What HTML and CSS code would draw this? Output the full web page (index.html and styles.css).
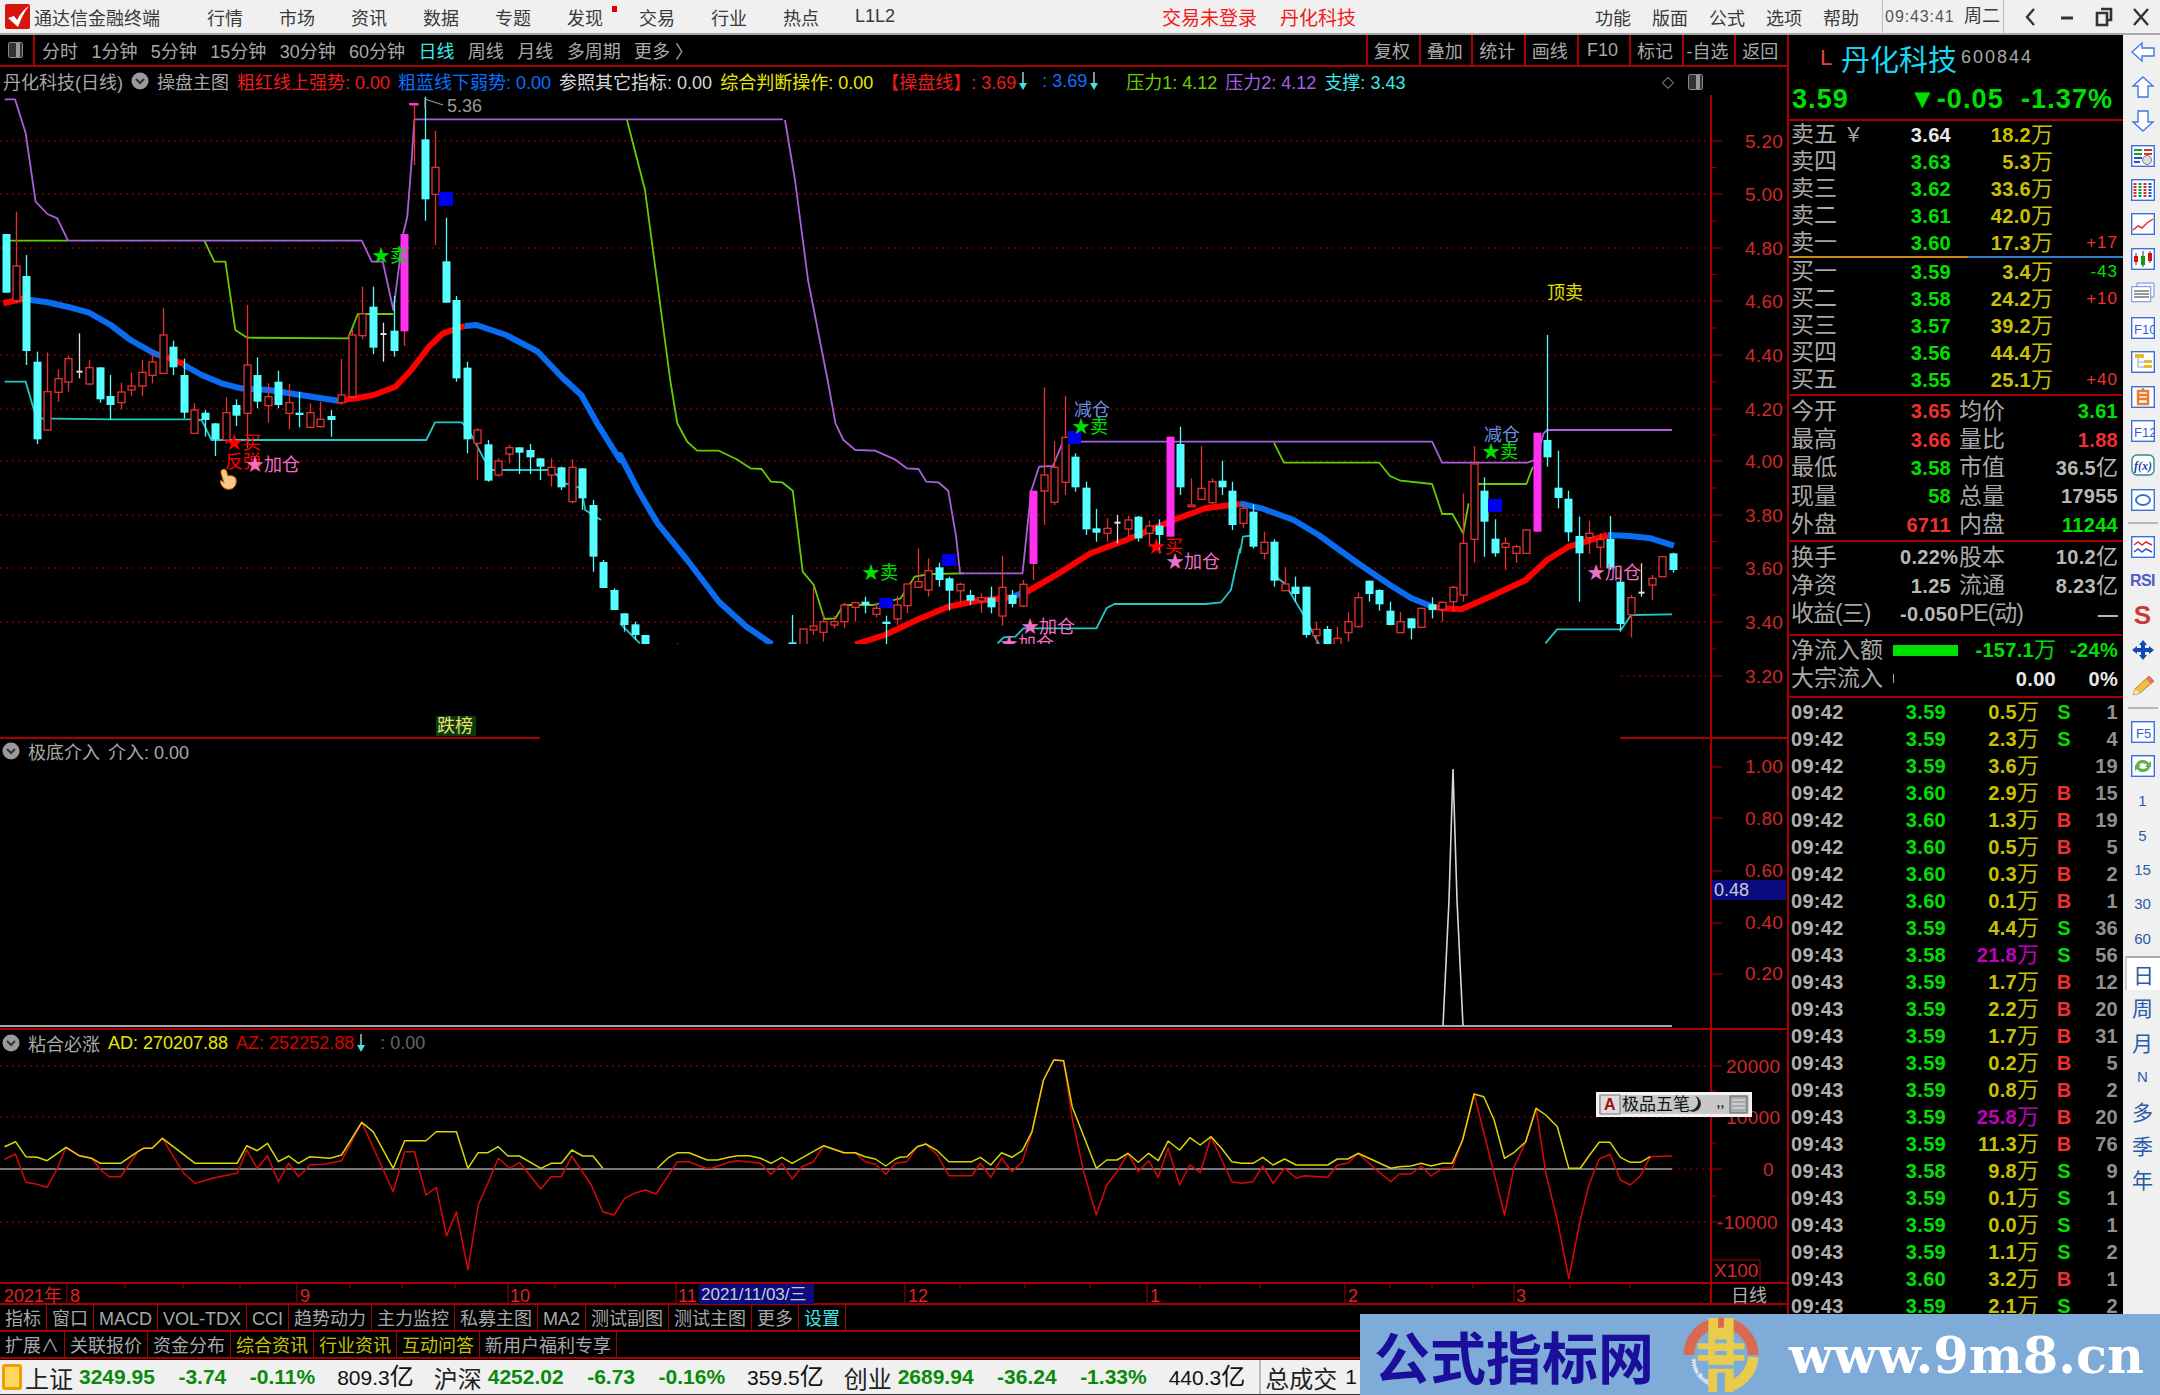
FILE: index.html
```html
<!DOCTYPE html>
<html lang="zh-CN">
<head>
<meta charset="utf-8">
<title>通达信金融终端</title>
<link rel="stylesheet" href="styles.css">
</head>
<body>
<div class="app">
  <header class="topbar">
    <svg class="logo" viewBox="0 0 25 25"><rect width="25" height="25" rx="2" fill="#d8140f"/><path d="M3 14 9 12 12 16C15 10 19 5 24 2 19 8 16 15 13 23Z" fill="#fff"/></svg>
    <span class="app-title">通达信金融终端</span>
    <nav class="menu">
      <span>行情</span><span>市场</span><span>资讯</span><span>数据</span><span>专题</span><span class="dotted">发现</span><span>交易</span><span>行业</span><span>热点</span><span>L1L2</span>
    </nav>
    <span class="top-red login">交易未登录</span>
    <span class="top-red stock">丹化科技</span>
    <nav class="menu menu-right"><span>功能</span><span>版面</span><span>公式</span><span>选项</span><span>帮助</span></nav>
    <span class="clock">09:43:41</span><span class="week">周二</span>
    <div class="winbtns">
      <svg viewBox="0 0 12 20"><path d="M10 2 3 10 10 18" fill="none" stroke="#333" stroke-width="2.4"/></svg>
      <svg viewBox="0 0 16 20"><path d="M2 11H14" stroke="#333" stroke-width="3"/></svg>
      <svg viewBox="0 0 18 20"><path d="M6 2H16V13H13M2 6H12V18H2Z" fill="none" stroke="#333" stroke-width="2.6"/></svg>
      <svg viewBox="0 0 18 20"><path d="M2 2 16 18M16 2 2 18" stroke="#333" stroke-width="2.4"/></svg>
    </div>
  </header>

  <div class="body">
    <main class="left">
      <div class="toolbar">
        <div class="tb-icon"><span class="winglyph"></span></div>
        <div class="tabs">
          <span>分时</span><span>1分钟</span><span>5分钟</span><span>15分钟</span><span>30分钟</span><span>60分钟</span><span class="on">日线</span><span>周线</span><span>月线</span><span>多周期</span><span>更多 〉</span>
        </div>
        <div class="tb-btns">
          <span>复权</span><span>叠加</span><span>统计</span><span>画线</span><span>F10</span><span>标记</span><span>-自选</span><span>返回</span>
        </div>
      </div>

      <section class="panel panel-main">
        <div class="legend legend-main">
          <span class="c-grey">丹化科技(日线)</span>
          <svg class="chev" viewBox="0 0 18 18"><circle cx="9" cy="9" r="8.5" fill="#9a9a9a"/><path d="M5 7 9 11 13 7" fill="none" stroke="#333" stroke-width="2"/></svg>
          <span class="c-grey">操盘主图</span>
          <span class="c-red">粗红线上强势: 0.00</span>
          <span class="c-blue">粗蓝线下弱势: 0.00</span>
          <span class="c-white">参照其它指标: 0.00</span>
          <span class="c-yellow">综合判断操作: 0.00</span>
          <span class="c-red item-arrow">【操盘线】: 3.69<svg class="down" viewBox="0 0 8 18"><path d="M4 0V12" stroke="#d8f8f8" stroke-width="1.2"/><path d="M0 11H8L4 18Z" fill="#3fe8e8"/></svg></span>
          <span class="c-blue item-arrow item-gap">: 3.69<svg class="down" viewBox="0 0 8 18"><path d="M4 0V12" stroke="#d8f8f8" stroke-width="1.2"/><path d="M0 11H8L4 18Z" fill="#3fe8e8"/></svg></span>
          <span class="c-lime item-gap2">压力1: 4.12</span>
          <span class="c-purple">压力2: 4.12</span>
          <span class="c-cyan">支撑: 3.43</span>
          <span class="legend-tools"><i class="diamond">◇</i><span class="winglyph"></span></span>
        </div>
        <svg class="plot plot-main" viewBox="0 95 1787 644">
          <g id="grid-main"></g>
          <g id="main-lines"></g>
          <g id="main-candles"></g>
          <path d="M425 108V99L443 105" fill="none" stroke="#9a9a9a" stroke-width="1.2"/>
          <text class="t-sm fill-grey" x="447" y="112">5.36</text>
          <g class="mark">
            <text class="fill-green" x="372" y="262">★卖</text>
            <text class="fill-red" x="225" y="449">★买</text>
            <text class="fill-red" x="225" y="468">反弹</text>
            <text class="fill-pink" x="246" y="471">★加仓</text>
            <text class="fill-green" x="862" y="579">★卖</text>
            <text class="fill-steel" x="1074" y="416">减仓</text>
            <text class="fill-green" x="1072" y="433">★卖</text>
            <text class="fill-red" x="1147" y="553">★买</text>
            <text class="fill-pink" x="1166" y="568">★加仓</text>
            <text class="fill-pink" x="1021" y="633">★加仓</text>
            <text class="fill-pink" x="1000" y="650">★加仓</text>
            <text class="fill-yellow" x="1547" y="299">顶卖</text>
            <text class="fill-steel" x="1484" y="441">减仓</text>
            <text class="fill-green" x="1482" y="458">★卖</text>
            <text class="fill-pink" x="1587" y="579">★加仓</text>
          </g>
          <path d="M222 470c2-2 5 0 5 3l1 3c3-1 7 0 8 3 1 4-1 9-5 10-5 1-8-1-10-5-1-3-1-4 1-3l2 2-3-10c0-2 0-3 1-3Z" fill="#f6c98a" stroke="#c76a10" stroke-width="1"/>
          <rect x="0" y="644" width="1620" height="93" fill="#000"/>
          <path class="dot" d="M1621 676H1711"/>
          <g id="axis-main"></g>
          <rect class="badge" x="436" y="716" width="40" height="20"/>
          <text class="badge-text" x="437" y="732">跌榜</text>
          <path class="red2" d="M0 738H540M1620 738H1787"/>
        </svg>
      </section>

      <section class="panel panel-mid">
        <div class="legend">
          <svg class="chev" viewBox="0 0 18 18"><circle cx="9" cy="9" r="8.5" fill="#9a9a9a"/><path d="M5 7 9 11 13 7" fill="none" stroke="#333" stroke-width="2"/></svg>
          <span class="c-grey">极底介入</span>
          <span class="c-grey">介入: 0.00</span>
        </div>
        <svg class="plot plot-mid" viewBox="0 763 1787 267">
          <path class="grey-line" d="M0 1026H1672"/>
          <path d="M1443 1026 1449 900 1453 769 1457 900 1463 1026" fill="none" stroke="#d8d8d8" stroke-width="1.6"/>
          <path class="red2" d="M1711 738V1030"/>
          <path class="red1" d="M1711 767H1722M1711 818H1722M1711 871H1722M1711 923H1722M1711 974H1722"/>
          <g class="axis-text">
            <text x="1745" y="773">1.00</text><text x="1745" y="825">0.80</text><text x="1745" y="877">0.60</text><text x="1745" y="929">0.40</text><text x="1745" y="980">0.20</text>
          </g>
          <rect x="1712" y="880" width="74" height="20" fill="#0b0b80"/>
          <text class="t-sm fill-lightgrey" x="1714" y="896">0.48</text>
          <path class="red2" d="M0 1029H1787"/>
        </svg>
      </section>

      <section class="panel panel-low">
        <div class="legend">
          <svg class="chev" viewBox="0 0 18 18"><circle cx="9" cy="9" r="8.5" fill="#9a9a9a"/><path d="M5 7 9 11 13 7" fill="none" stroke="#333" stroke-width="2"/></svg>
          <span class="c-grey">粘合必涨</span>
          <span class="c-yellow">AD: 270207.88</span>
          <span class="c-red2 item-arrow">AZ: 252252.88<svg class="down" viewBox="0 0 8 18"><path d="M4 0V12" stroke="#d8f8f8" stroke-width="1.2"/><path d="M0 11H8L4 18Z" fill="#3fe8e8"/></svg></span>
          <span class="c-dim item-gap">: 0.00</span>
        </div>
        <svg class="plot plot-low" viewBox="0 1056 1787 226">
          <path class="dot" d="M0 1066H1711M0 1117H1711M0 1222H1711M1672 1169H1711"/>
          <path class="zero" d="M0 1169H1672"/>
          <g id="low-lines"></g>
          <path class="red2" d="M1711 1030V1282"/>
          <path class="red1" d="M1711 1066H1722M1711 1117H1722M1711 1169H1722M1711 1222H1722M1711 1091H1716M1711 1143H1716M1711 1196H1716M1711 1260H1760V1281"/>
          <g class="axis-text">
            <text x="1726" y="1073">20000</text><text x="1726" y="1124">10000</text><text x="1763" y="1176">0</text><text x="1717" y="1229">-10000</text>
          </g>
          <text class="t-axis-x" x="1714" y="1277">X100</text>
          <g class="ime">
            <rect x="1596" y="1092" width="156" height="25" fill="#f2f2f2"/>
            <rect x="1599" y="1095" width="150" height="19" fill="#c8c8c8"/>
            <rect x="1600" y="1095" width="20" height="19" fill="#ddd" stroke="#777"/>
            <text class="ime-a" x="1604" y="1110">A</text>
            <text class="ime-t" x="1622" y="1110">极品五笔</text>
            <path d="M1695 1096a8 8 0 1 1-7 14 8 8 0 0 0 7-14Z" fill="#222"/>
            <text class="ime-t" x="1716" y="1107">,</text>
            <text class="ime-t" x="1720" y="1107">,</text>
            <rect x="1730" y="1096" width="17" height="17" fill="#aaa" stroke="#666"/>
            <path d="M1732 1100H1745M1732 1104H1745M1732 1108H1745" stroke="#eee"/>
          </g>
        </svg>
      </section>

      <svg class="plot timeaxis" viewBox="0 1282 1787 23">
        <path class="red2" d="M0 1283H1787M0 1304H1787M1711 1282V1305"/>
        <path class="red1" d="M67 1283V1304M297 1283V1304M508 1283V1304M676 1283V1304M905 1283V1304M1147 1283V1304M1345 1283V1304M1514 1283V1304M125 1283V1288M183 1283V1288M240 1283V1288M350 1283V1288M402 1283V1288M455 1283V1288M555 1283V1288M615 1283V1288M780 1283V1288M960 1283V1288M1025 1283V1288M1090 1283V1288M1200 1283V1288M1260 1283V1288M1390 1283V1288M1432 1283V1288M1473 1283V1288M1570 1283V1288M1630 1283V1288"/>
        <g class="date-text">
          <text x="4" y="1302">2021年</text><text x="70" y="1302">8</text><text x="300" y="1302">9</text><text x="510" y="1302">10</text><text x="678" y="1302">11</text><text x="908" y="1302">12</text><text x="1150" y="1302">1</text><text x="1348" y="1302">2</text><text x="1516" y="1302">3</text>
        </g>
        <rect x="699" y="1284" width="115" height="20" fill="#0b0b80"/>
        <text class="date-sel" x="701" y="1300">2021/11/03/三</text>
        <text class="date-right" x="1731" y="1302">日线</text>
      </svg>

      <div class="btnrow">
        <span>指标</span><span>窗口</span><span>MACD</span><span>VOL-TDX</span><span>CCI</span><span>趋势动力</span><span>主力监控</span><span>私募主图</span><span>MA2</span><span>测试副图</span><span>测试主图</span><span>更多</span><span class="c-cyan">设置</span>
      </div>
      <div class="btnrow">
        <span>扩展∧</span><span>关联报价</span><span>资金分布</span><span class="c-olive">综合资讯</span><span class="c-olive">行业资讯</span><span class="c-olive">互动问答</span><span>新用户福利专享</span>
      </div>
    </main>

    <aside class="quote">
      <div class="q-name"><span class="q-l">L</span><span class="q-cn">丹化科技</span><span class="q-code">600844</span></div>
      <div class="q-price"><span>3.59</span><span class="q-chg">▼-0.05</span><span class="q-pct">-1.37%</span></div>

      <div class="book">
        <div class="b-row"><span class="lb">卖五 <small>￥</small></span><span class="num c-w">3.64</span><span class="vol">18.2<i>万</i></span><span class="dlt"></span></div>
        <div class="b-row"><span class="lb">卖四</span><span class="num c-g">3.63</span><span class="vol">5.3<i>万</i></span><span class="dlt"></span></div>
        <div class="b-row"><span class="lb">卖三</span><span class="num c-g">3.62</span><span class="vol">33.6<i>万</i></span><span class="dlt"></span></div>
        <div class="b-row"><span class="lb">卖二</span><span class="num c-g">3.61</span><span class="vol">42.0<i>万</i></span><span class="dlt"></span></div>
        <div class="b-row"><span class="lb">卖一</span><span class="num c-g">3.60</span><span class="vol">17.3<i>万</i></span><span class="dlt c-r">+17</span></div>
      </div>
      <div class="twotone"><span></span><span></span></div>
      <div class="book book-buy">
        <div class="b-row"><span class="lb">买一</span><span class="num c-g">3.59</span><span class="vol">3.4<i>万</i></span><span class="dlt c-g">-43</span></div>
        <div class="b-row"><span class="lb">买二</span><span class="num c-g">3.58</span><span class="vol">24.2<i>万</i></span><span class="dlt c-r">+10</span></div>
        <div class="b-row"><span class="lb">买三</span><span class="num c-g">3.57</span><span class="vol">39.2<i>万</i></span><span class="dlt"></span></div>
        <div class="b-row"><span class="lb">买四</span><span class="num c-g">3.56</span><span class="vol">44.4<i>万</i></span><span class="dlt"></span></div>
        <div class="b-row"><span class="lb">买五</span><span class="num c-g">3.55</span><span class="vol">25.1<i>万</i></span><span class="dlt c-r">+40</span></div>
      </div>

      <div class="stats stats-a">
        <div class="s-row"><span class="lb">今开</span><span class="num c-r">3.65</span><span class="lb l2">均价</span><span class="num c-g">3.61</span></div>
        <div class="s-row"><span class="lb">最高</span><span class="num c-r">3.66</span><span class="lb l2">量比</span><span class="num c-r">1.88</span></div>
        <div class="s-row"><span class="lb">最低</span><span class="num c-g">3.58</span><span class="lb l2">市值</span><span class="num c-s">36.5<i>亿</i></span></div>
        <div class="s-row"><span class="lb">现量</span><span class="num c-g">58</span><span class="lb l2">总量</span><span class="num c-s">17955</span></div>
        <div class="s-row"><span class="lb">外盘</span><span class="num c-r">6711</span><span class="lb l2">内盘</span><span class="num c-g">11244</span></div>
      </div>
      <div class="stats stats-b">
        <div class="s-row"><span class="lb">换手</span><span class="num c-s">0.22%</span><span class="lb l2">股本</span><span class="num c-s">10.2<i>亿</i></span></div>
        <div class="s-row"><span class="lb">净资</span><span class="num c-s">1.25</span><span class="lb l2">流通</span><span class="num c-s">8.23<i>亿</i></span></div>
        <div class="s-row"><span class="lb lb-tight">收益(三)</span><span class="num c-s">-0.050</span><span class="lb l2 lb-tight">PE(动)</span><span class="num c-s">—</span></div>
      </div>
      <div class="flow">
        <div class="f-row"><span class="lb">净流入额</span><span class="bar"><b></b></span><span class="num c-g">-157.1<i>万</i></span><span class="num c-g">-24%</span></div>
        <div class="f-row"><span class="lb">大宗流入</span><span class="bar"><u></u></span><span class="num c-w">0.00</span><span class="num c-w">0%</span></div>
      </div>
      <div class="ticks" id="ticks"></div>
    </aside>

    <aside class="iconbar">
      <div class="ic"><svg viewBox="0 0 24 22"><path d="M1 11 11 2V7H23V15H11V20Z" class="ol"/></svg></div>
      <div class="ic"><svg viewBox="0 0 24 22"><path d="M12 1 22 10H17V21H7V10H2Z" class="ol"/></svg></div>
      <div class="ic"><svg viewBox="0 0 24 22"><path d="M12 21 22 12H17V1H7V12H2Z" class="ol"/></svg></div>
      <div class="ic"><svg viewBox="0 0 24 22"><rect class="box" x=".7" y=".7" width="22.6" height="20.6"/><path d="M3 5H11M3 9H11" stroke="#1a9a30" stroke-width="2"/><path d="M13 5H21M13 9H21" stroke="#d83030" stroke-width="2"/><path d="M3 13H11M3 17H9" stroke="#2a50c0" stroke-width="2"/><circle cx="16" cy="15" r="4.5" fill="#ddd" stroke="#777"/></svg></div>
      <div class="ic"><svg viewBox="0 0 24 22"><rect class="box" x=".7" y=".7" width="22.6" height="20.6"/><path d="M4 4V18" stroke="#d83030" stroke-width="3" stroke-dasharray="2 1"/><path d="M9 4V18" stroke="#1a9a30" stroke-width="3" stroke-dasharray="2 1"/><path d="M14 4V18" stroke="#d83030" stroke-width="3" stroke-dasharray="2 1"/><path d="M19 4V18" stroke="#2a50c0" stroke-width="3" stroke-dasharray="2 1"/></svg></div>
      <div class="ic"><svg viewBox="0 0 24 22"><rect class="box" x=".7" y=".7" width="22.6" height="20.6"/><path d="M2 17 7 13 11 15 16 10 22 6" fill="none" stroke="#e03030" stroke-width="1.5"/></svg></div>
      <div class="ic"><svg viewBox="0 0 24 22"><rect class="box" x=".7" y=".7" width="22.6" height="20.6"/><path d="M5 5V17M12 3V19M19 3V15" stroke="#333"/><rect x="3" y="8" width="4" height="6" fill="#d81010"/><rect x="10" y="8" width="4" height="9" fill="#109a10"/><rect x="17" y="5" width="4" height="8" fill="#d81010"/></svg></div>
      <div class="ic"><svg viewBox="0 0 24 22"><path d="M6 1H23V15H6Z" fill="#f4f8ff" stroke="#6a90d8"/><rect x=".7" y="4.7" width="19" height="15" fill="#fff" stroke="#6a90d8"/><path d="M3 9H18M3 12H18M3 15H18" stroke="#777" stroke-width="1.4"/></svg></div>
      <div class="ic"><svg viewBox="0 0 24 22"><rect class="box" x=".7" y=".7" width="22.6" height="20.6"/><text class="ic-f" x="3" y="17">F10</text></svg></div>
      <div class="ic"><svg viewBox="0 0 24 22"><rect class="box" x=".7" y=".7" width="22.6" height="20.6"/><path d="M7 7V16H13M7 11H13" fill="none" stroke="#8aa0d0"/><rect x="4" y="3" width="9" height="4" fill="#e8b830"/><rect x="13" y="9" width="8" height="3" fill="#e8b830"/><rect x="13" y="14" width="8" height="3" fill="#e8b830"/></svg></div>
      <div class="ic"><svg viewBox="0 0 24 22"><rect class="box" x=".7" y=".7" width="22.6" height="20.6"/><path d="M7 5H17V18H7ZM7 9H17M7 13H17M12 2V5" fill="none" stroke="#f07a28" stroke-width="2.4"/></svg></div>
      <div class="ic"><svg viewBox="0 0 24 22"><rect class="box" x=".7" y=".7" width="22.6" height="20.6"/><text class="ic-f" x="3" y="17">F12</text></svg></div>
      <div class="ic"><svg viewBox="0 0 24 22"><rect x="1" y="1" width="22" height="20" rx="5" fill="#fff" stroke="#2a8a8a" stroke-width="1.4"/><text class="ic-fx" x="3" y="16">f(x)</text></svg></div>
      <div class="ic"><svg viewBox="0 0 24 22"><rect class="box" x=".7" y=".7" width="22.6" height="20.6"/><ellipse cx="12" cy="11" rx="7" ry="5" fill="#fff" stroke="#3a70d0" stroke-width="2"/></svg></div>
      <div class="ic sep"></div>
      <div class="ic"><svg viewBox="0 0 24 22"><rect class="box" x=".7" y=".7" width="22.6" height="20.6"/><path d="M3 9 7 6 11 9 15 6 21 9" fill="none" stroke="#d83030" stroke-width="1.5"/><path d="M3 16 7 13 11 16 15 13 21 16" fill="none" stroke="#3050d0" stroke-width="1.5"/></svg></div>
      <div class="ic ic-rsi">RSI</div>
      <div class="ic ic-s">S</div>
      <div class="ic"><svg viewBox="0 0 24 22"><path d="M12 1 16 6H14V9H18V7L23 11 18 15V13H14V16H16L12 21 8 16H10V13H6V15L1 11 6 7V9H10V6H8Z" fill="#1048b8"/></svg></div>
      <div class="ic"><svg viewBox="0 0 24 22"><path d="M2 21 4 15 18 2 23 7 9 19Z" fill="#f0c040" stroke="#b88020"/><path d="M18 2 23 7 20 10 15 5Z" fill="#e87070"/><path d="M2 21 4 15 9 19Z" fill="#f8e0c0"/></svg></div>
      <div class="ic sep"></div>
      <div class="ic"><svg viewBox="0 0 24 22"><rect class="box" x=".7" y=".7" width="22.6" height="20.6"/><text class="ic-f" x="5" y="17">F5</text></svg></div>
      <div class="ic"><svg viewBox="0 0 24 22"><rect class="box" x=".7" y=".7" width="22.6" height="20.6"/><path d="M5 10A7 6 0 0 1 18 8L20 6V12H14L16 10A5 4 0 0 0 7 11ZM19 12A7 6 0 0 1 6 14L4 16V10H10L8 12A5 4 0 0 0 17 11Z" fill="#60b050"/></svg></div>
      <div class="ic per">1</div><div class="ic per">5</div><div class="ic per">15</div><div class="ic per">30</div><div class="ic per">60</div>
      <div class="ic per cn sel">日</div><div class="ic per cn">周</div><div class="ic per cn">月</div><div class="ic per">N</div><div class="ic per cn">多</div><div class="ic per cn">季</div><div class="ic per cn">年</div>
    </aside>
  </div>

  <footer class="status">
    <span class="st-ic"></span>
    <span class="st-name">上证</span><span class="st-g first">3249.95</span><span class="st-g">-3.74</span><span class="st-g">-0.11%</span><span class="st-k">809.3<i>亿</i></span>
    <span class="st-name">沪深</span><span class="st-g first">4252.02</span><span class="st-g">-6.73</span><span class="st-g">-0.16%</span><span class="st-k">359.5<i>亿</i></span>
    <span class="st-name">创业</span><span class="st-g first">2689.94</span><span class="st-g">-36.24</span><span class="st-g">-1.33%</span><span class="st-k">440.3<i>亿</i></span>
    <span class="st-name st-total">总成交</span><span class="st-k first">1</span>
  </footer>

  <div class="watermark">
    <span class="wm-cn">公式指标网</span>
    <svg class="wm-logo" viewBox="-40 -40 80 80">
      <path d="M-33 0A33 33 0 0 1 33 0" fill="none" stroke="#d96a52" stroke-width="11"/>
      <path d="M33 2A33 33 0 0 1 2 33" fill="none" stroke="#e9cc4c" stroke-width="11"/>
      <path id="wmarc" d="M-30 4A30 30 0 0 0 2 34" fill="none"/>
      <text class="wm-mini"><textPath href="#wmarc">www.9m8.cn</textPath></text>
      <path d="M-13-38H-3V-28H3V-38H13V-12H24V-6H13V0H24V6H13V38H-13V6H-24V0H-13V-6H-24V-12H-13Z" fill="#e9cc4c"/>
      <path d="M-6-16H6V-12H-6ZM-6-4H6V0H-6ZM-13 10H13V14H-13ZM-4 18H4V38H-4Z" fill="#7fabd9"/>
    </svg>
    <span class="wm-url">www.9m8.cn</span>
  </div>
</div>
<script src="charts.js"></script>
</body>
</html>
```
FILE: styles.css
```css
* { box-sizing: border-box; }
html, body { margin: 0; padding: 0; background: #000; }
body { width: 2160px; height: 1395px; overflow: hidden; font-family: "Liberation Sans", "Noto Sans CJK SC", sans-serif; font-size: 18px; color: #a8a8a8; }
i { font-style: normal; }
.app { position: relative; width: 2160px; height: 1395px; display: flex; flex-direction: column; }

/* title bar */
.topbar { height: 35px; flex: none; background: #f0f0f0; border-bottom: 2px solid #a8a8a8; display: flex; align-items: center; color: #3a3a3a; }
.logo { width: 25px; height: 25px; margin-left: 5px; flex: none; }
.app-title { margin-left: 4px; font-size: 18px; width: 128px; white-space: nowrap; }
.menu { display: flex; gap: 36px; margin-left: 45px; font-size: 18px; align-items: center; }
.menu span { position: relative; white-space: nowrap; }
.dotted::after { content: ""; position: absolute; top: 2px; right: -14px; width: 5px; height: 6px; background: #e00000; }
.top-red { color: #ee1c1c; font-size: 19px; white-space: nowrap; }
.login { margin-left: 267px; }
.stock { margin-left: 23px; }
.menu-right { margin-left: 239px; gap: 21px; }
.clock { margin-left: 23px; padding-left: 2px; border-left: 1px solid #bbb; height: 33px; line-height: 33px; width: 82px; font-size: 16px; letter-spacing: .9px; color: #555; }
.week { font-size: 18px; color: #3a3a3a; width: 40px; height: 33px; line-height: 33px; border-right: 1px solid #bbb; }
.winbtns { display: flex; align-items: center; margin-left: 17px; gap: 19px; }
.winbtns svg { height: 20px; width: 18px; }

/* main layout */
.body { flex: 1; display: flex; min-height: 0; }
.left { width: 1787px; flex: none; display: flex; flex-direction: column; background: #000; }
.toolbar { height: 32px; flex: none; display: flex; align-items: center; border-bottom: 2px solid #a80000; color: #a8a8a8; }
.tb-icon { width: 35px; height: 30px; border-right: 2px solid #a80000; display: flex; align-items: center; padding-left: 8px; }
.winglyph { display: inline-block; width: 15px; height: 16px; border: 1px solid #888; border-radius: 2px; background: linear-gradient(90deg, #333 55%, #999 55%, #999 85%, #333 85%); }
.tabs { display: flex; gap: 13.4px; margin-left: 7px; white-space: nowrap; flex: 1; }
.tabs .on { color: #3fe8e8; }
.tb-btns { display: flex; height: 30px; }
.tb-btns span { width: 52.6px; border-left: 2px solid #a80000; display: flex; align-items: center; justify-content: center; white-space: nowrap; padding-right: 3px; }

.panel { flex: none; position: relative; }
.panel-main { height: 672px; }
.panel-mid { height: 291px; }
.panel-low { height: 252px; }
.legend { display: flex; align-items: center; gap: 8px; height: 24px; white-space: nowrap; padding-left: 2px; }
.legend-main { height: 28px; padding-left: 3px; }
.panel-low .legend { height: 26px; }
.chev { width: 18px; height: 18px; flex: none; }
.item-arrow { display: inline-flex; align-items: center; }
.down { width: 8px; height: 18px; margin-left: 3px; flex: none; }
.item-gap { margin-left: 7px; }
.item-gap2 { margin-left: 20px; }
.legend-tools { position: absolute; right: 84px; top: 5px; display: flex; gap: 14px; align-items: center; color: #888; }
.diamond { font-size: 16px; font-family: "DejaVu Sans", sans-serif; }
.c-grey { color: #a8a8a8; } .c-red { color: #ee1c1c; } .c-red2 { color: #d80000; } .c-blue { color: #0a70ff; } .c-white { color: #d8d8d8; }
.c-yellow { color: #e8e800; } .c-lime { color: #70d000; } .c-purple { color: #a860e8; } .c-cyan { color: #3fe8e8; } .c-dim { color: #666; } .c-olive { color: #c8c000; }

.plot { display: block; width: 1787px; overflow: visible; }
.plot-main { height: 644px; }
.plot-mid { height: 267px; }
.plot-low { height: 226px; }
.timeaxis { height: 23px; flex: none; }
.plot text { font-family: "Liberation Sans", "Noto Sans CJK SC", sans-serif; }
.dot { stroke: #b00000; stroke-width: 1; stroke-dasharray: 2 4; fill: none; }
.red2 { stroke: #a80000; stroke-width: 2; fill: none; }
.red1 { stroke: #a80000; stroke-width: 1; fill: none; }
.grey-line { stroke: #a8a8a8; stroke-width: 2; fill: none; }
.zero { stroke: #777; stroke-width: 2; fill: none; }
.axis-text text { fill: #d02828; font-size: 19px; letter-spacing: .3px; }
.t-sm { font-size: 18px; }
.fill-grey { fill: #999; } .fill-lightgrey { fill: #ccc; } .fill-green { fill: #00e000; } .fill-red { fill: #f00; } .fill-pink { fill: #f070c8; } .fill-steel { fill: #6a90e0; } .fill-yellow { fill: #e0e000; }
.mark text { font-size: 18px; }
.badge { fill: #0c3a10; }
.badge-text { font-size: 18px; fill: #e8e070; }
.t-axis-x { fill: #d02828; font-size: 19px; }
.ime-a { fill: #a01010; font-size: 16px; font-weight: 700; }
.ime-t { fill: #111; font-size: 17px; }
.date-text text { fill: #e02020; font-size: 18px; }
.date-sel { fill: #ccc; font-size: 17px; }
.date-right { fill: #b0b0b0; font-size: 18px; }

.btnrow { height: 27px; flex: none; display: flex; align-items: flex-start; border-bottom: 2px solid #a80000; }
.btnrow span { height: 25px; line-height: 29px; padding: 0 5px; border-right: 1px solid #a80000; white-space: nowrap; }

/* quote panel */
.quote { width: 336px; flex: none; border-left: 2px solid #a80000; background: #000; overflow: hidden; display: flex; flex-direction: column; }
.q-name { height: 45px; flex: none; display: flex; align-items: center; }
.q-l { color: #e84040; font-size: 22px; margin-left: 31px; width: 21px; }
.q-cn { color: #18d8f0; font-size: 29px; width: 120px; white-space: nowrap; }
.q-code { color: #a8a8a8; font-size: 18px; letter-spacing: 2px; }
.q-price { height: 41px; flex: none; display: flex; align-items: center; border-bottom: 2px solid #a80000; color: #00e000; font-weight: 700; font-size: 27px; padding-left: 3px; letter-spacing: 1.1px; }
.q-chg { margin-left: 60px; width: 112px; white-space: nowrap; }
.q-pct { white-space: nowrap; }
.book { flex: none; padding-left: 2px; }
.book-buy { border-bottom: 2px solid #a80000; height: 138px; }
.b-row, .s-row, .f-row, .t-row { line-height: 1; }
.b-row { height: 27px; display: grid; grid-template-columns: 109px 51px 102px 65px; grid-template-rows: 27px; align-items: center; }
.lb { font-size: 23px; color: #a8a8a8; white-space: nowrap; line-height: 1; }
.lb-tight { letter-spacing: -1px; }
.lb small { font-size: 20px; }
.num { font-size: 20px; font-weight: 700; text-align: right; white-space: nowrap; letter-spacing: .3px; }
.num i, .vol i, .t-vol i { font-size: 22px; font-weight: 400; letter-spacing: 0; line-height: 1; }
.vol { font-size: 20px; font-weight: 700; color: #c8c000; text-align: right; white-space: nowrap; letter-spacing: .3px; }
.dlt { font-size: 17px; text-align: right; letter-spacing: 1px; }
.c-w { color: #e8e8e8; } .c-g { color: #00e000; } .c-r { color: #f03030; } .c-s { color: #b8b8b8; }
.twotone { height: 2px; flex: none; display: flex; }
.twotone span:first-child { width: 179px; background: #c88a10; }
.twotone span:last-child { flex: 1; background: #2a80cc; }
.stats { flex: none; padding: 1px 0 0 2px; border-bottom: 2px solid #a80000; }
.stats-a { height: 146px; }
.stats-b { height: 94px; }
.s-row { height: 28.4px; display: grid; grid-template-columns: 109px 51px 84px 83px; grid-template-rows: 28.4px; align-items: center; }
.l2 { padding-left: 8px; }
.flow { height: 62px; flex: none; padding-left: 2px; border-bottom: 2px solid #a80000; }
.f-row { height: 28.5px; display: grid; grid-template-columns: 102px 65px 98px 62px; grid-template-rows: 28.5px; align-items: center; }
.bar { display: flex; align-items: center; }
.bar b { width: 66px; height: 11px; background: #00e000; }
.bar u { width: 1px; height: 9px; background: #aaa; }
.ticks { flex: 1; min-height: 0; overflow: hidden; padding-left: 2px; }
.t-row { height: 27px; display: grid; grid-template-columns: 99px 56px 93px 50px 29px; grid-template-rows: 27px; align-items: center; font-size: 20px; font-weight: 700; letter-spacing: .3px; }
.t-time { color: #b0b0b0; }
.t-price { color: #00e000; text-align: right; }
.t-vol { color: #c8c000; text-align: right; }
.t-vol.big { color: #c000c0; }
.t-bs { text-align: center; }
.t-bs.B { color: #f03030; } .t-bs.S { color: #00e000; }
.t-n { color: #909090; text-align: right; }

/* right-hand icon strip */
.iconbar { flex: 1; background: #f0f0f0; display: flex; flex-direction: column; align-items: center; padding: 0 0 0 2px; overflow: hidden; }
.ic { height: 34.45px; flex: none; width: 100%; display: flex; align-items: center; justify-content: center; }
.ic svg { width: 24px; height: 22px; }
.ol { fill: #fff; stroke: #3a7be0; stroke-width: 1.4; }
.box { fill: #fff; stroke: #3a70e0; stroke-width: 1.4; }
.ic-f { font: 400 13px "Liberation Sans", sans-serif; fill: #2f5fd8; }
.ic-fx { font: italic 700 12px "Liberation Serif", serif; fill: #2040b0; }
.ic.sep { height: 12.6px; }
.sep::after { content: ""; display: block; width: 30px; height: 2px; background: #b8b8b8; }
.ic-rsi { font: 700 16px "Liberation Sans", sans-serif; color: #4a5ac8; letter-spacing: -.6px; }
.ic-s { font: 700 26px "Liberation Sans", sans-serif; color: #c83a3a; }
.per { color: #2a5aa8; font-size: 15px; }
.per.cn { font-size: 21px; }
.sel { background: #fff; border-top: 2px solid #aaa; border-left: 2px solid #ccc; }

/* status line */
.status { height: 35px; flex: none; background: #f0f0f0; border-bottom: 1px solid #333; display: flex; align-items: center; font-size: 21px; white-space: nowrap; overflow: hidden; }
.st-ic { width: 20px; height: 26px; margin-left: 2px; border: 3px solid #f0a000; border-radius: 3px; background: #ffd860; }
.st-name { font-size: 24px; color: #222; margin-left: 20px; }
.st-ic + .st-name { margin-left: 3px; }
.st-g { color: #0a8a0a; margin-left: 23.5px; font-weight: 700; }
.st-g.first { margin-left: 6px; }
.st-k { color: #111; margin-left: 22px; }
.st-k i { font-size: 24px; line-height: 1; }
.st-total { padding-left: 4px; border-left: 2px solid #bbb; margin-left: 14px; }
.st-k.first { margin-left: 8px; }

/* site watermark */
.watermark { position: absolute; left: 1360px; top: 1314px; width: 800px; height: 81px; background: #7fabd9; display: flex; align-items: center; }
.wm-cn { margin-left: 14px; width: 306px; font: 700 56px "Noto Sans CJK SC", sans-serif; color: #1a0f9a; white-space: nowrap; line-height: 1; }
.wm-logo { width: 78px; height: 78px; flex: none; margin-left: 2px; }
.wm-mini { font: 700 7px "Liberation Sans", sans-serif; fill: #fff; }
.wm-url { margin-left: 29px; font: 700 51px "DejaVu Serif", serif; color: #fff; white-space: nowrap; }
```
FILE: charts.js
```js
// Chart data are kept in the pixel space of each chart window.
var SVGNS = 'http://www.w3.org/2000/svg';
var Z = { a: [0, 2.529, 90], b: [620, 2.529, 380], c: [1240, 2.8, 270], d: [0, 1.742, 1030], e: [900, 1.742, 1030] };

function conv(z, arr) {
  var out = [];
  for (var i = 0; i < arr.length; i += 2) {
    out.push((Z[z][0] + arr[i] / Z[z][1]).toFixed(1) + ' ' + (Z[z][2] + arr[i + 1] / 3).toFixed(1));
  }
  return out;
}
function add(g, name, attrs) {
  var e = document.createElementNS(SVGNS, name);
  for (var k in attrs) e.setAttribute(k, attrs[k]);
  g.appendChild(e);
  return e;
}
function line(g, pts, color, w, extra) {
  var a = { points: pts.join(' '), fill: 'none', stroke: color, 'stroke-width': w, 'stroke-linejoin': 'round' };
  for (var k in extra) a[k] = extra[k];
  add(g, 'polyline', a);
}

/* ---------- grid and price axis ---------- */
var gridMain = document.getElementById('grid-main');
var axisMain = document.getElementById('axis-main');
var levels = [[141, '5.20'], [194, '5.00'], [248, '4.80'], [301, '4.60'], [355, '4.40'], [409, '4.20'], [461, '4.00'], [515, '3.80'], [568, '3.60'], [622, '3.40'], [676, '3.20']];
levels.forEach(function (l, n) {
  if (l[0] < 640) add(gridMain, 'path', { d: 'M0 ' + l[0] + 'H1711', 'class': 'dot' });
  add(axisMain, 'path', { d: 'M1711 ' + l[0] + 'H1722', 'class': 'red1' });
  if (n < levels.length - 1) add(axisMain, 'path', { d: 'M1711 ' + ((l[0] + levels[n + 1][0]) / 2) + 'H1716', 'class': 'red1' });
  var t = add(axisMain, 'text', { x: 1745, y: l[0] + 7 });
  t.textContent = l[1];
  t.setAttribute('fill', '#d02828');
  t.setAttribute('font-size', '19');
  t.setAttribute('letter-spacing', '.3');
});
add(axisMain, 'path', { d: 'M1711 95V738', 'class': 'red2' });

/* ---------- thin lines ---------- */
var ml = document.getElementById('main-lines');
var PURPLE = '#a860d8', GREEN = '#66cc00', TEAL = '#22c8c8', THIN = 1.8;

line(ml, conv('a', [20, 452, 172, 452]), GREEN, THIN);
line(ml, ['627 120', '645 190'].concat(conv('b', [127, 0, 145, 130, 170, 185, 195, 212, 250, 212, 295, 238, 330, 265, 358, 267, 382, 305, 410, 307, 437, 332, 462, 575, 490, 615, 517, 717, 545, 715, 565, 675, 640, 675, 710, 655, 745, 590, 785, 582, 870, 580])), GREEN, THIN);
line(ml, conv('a', [517, 452, 542, 515, 570, 515, 595, 720, 625, 743, 880, 745, 905, 672, 995, 672]), GREEN, THIN);
line(ml, conv('c', [95, 518, 123, 578, 390, 578, 420, 618, 450, 632, 538, 642, 566, 732, 595, 732, 625, 790, 640, 700]), GREEN, THIN);
line(ml, conv('c', [665, 642, 802, 642, 820, 590]), GREEN, THIN);

line(ml, conv('a', [12, 28, 38, 28, 65, 130, 90, 335, 120, 372, 145, 385, 172, 452, 915, 452, 940, 515, 968, 515, 995, 660, 1020, 430, 1030, 380, 1040, 230, 1048, 88, 1980, 88]), PURPLE, THIN);
line(ml, ['785 120', '795 180', '808 280'].concat(conv('b', [525, 0, 545, 130, 565, 180, 595, 210, 645, 212, 695, 238, 725, 265, 755, 267, 775, 305, 805, 307, 830, 332, 850, 470, 860, 580, 1018, 580, 1040, 332, 1060, 260, 1095, 258, 1120, 185, 1568, 185])), PURPLE, THIN);
line(ml, conv('c', [0, 515, 538, 515, 566, 578, 805, 578, 830, 568, 850, 490, 860, 480, 1210, 480]), PURPLE, THIN);

line(ml, conv('a', [12, 875, 65, 875, 92, 985, 280, 988, 480, 988, 510, 990, 535, 1050, 1078, 1050, 1100, 997, 1168, 997, 1190, 1030, 1225, 1110, 1240, 1140, 1395, 1140, 1430, 1180, 1470, 1195, 1480, 1260, 1520, 1290]), TEAL, THIN);
line(ml, conv('b', [0, 730, 50, 790]), TEAL, THIN);
line(ml, conv('b', [955, 790, 970, 772, 1000, 770, 1020, 745, 1205, 745, 1230, 685, 1250, 672, 1480, 672, 1520, 667, 1545, 630, 1568, 505]), TEAL, THIN);
line(ml, conv('c', [0, 850, 8, 800, 30, 797]), TEAL, THIN);
line(ml, conv('c', [100, 920, 125, 940, 175, 1030, 222, 1125]), TEAL, THIN);
line(ml, conv('c', [855, 1120, 888, 1078, 1068, 1078, 1095, 1035, 1210, 1033]), TEAL, THIN);

/* ---------- trend line: red when rising, blue when falling ---------- */
var RED = '#ff0000', BLUE = '#0a6cf0';
line(ml, conv('a', [8, 640, 65, 625]), RED, 6);
line(ml, conv('a', [65, 628, 120, 637, 170, 650, 225, 668, 280, 705, 330, 750, 390, 790, 420, 802]), BLUE, 6);
line(ml, conv('a', [420, 802, 465, 822]), RED, 6);
line(ml, conv('a', [465, 825, 510, 855, 560, 880, 610, 895, 680, 900, 760, 915, 855, 932]), BLUE, 6);
line(ml, conv('a', [855, 932, 900, 925, 945, 915, 1000, 890, 1040, 840, 1085, 770, 1120, 730, 1175, 708]), RED, 6);
line(ml, conv('a', [1175, 708, 1205, 705, 1280, 735, 1360, 785, 1420, 860, 1470, 915, 1510, 1000, 1568, 1110]).concat(conv('b', [0, 225, 50, 340, 95, 430, 170, 540, 250, 665, 320, 740, 385, 793])), BLUE, 6);
line(ml, conv('b', [595, 793, 670, 765, 750, 720, 830, 680, 900, 663, 990, 652]), RED, 6);
line(ml, conv('b', [990, 652, 1015, 640]), BLUE, 6);
line(ml, conv('b', [1015, 640, 1030, 635, 1110, 580, 1190, 520, 1280, 480, 1340, 450, 1400, 420, 1480, 385, 1568, 372]).concat(conv('c', [0, 700])), RED, 6);
line(ml, conv('c', [0, 700, 60, 715, 150, 750, 220, 795, 330, 880, 420, 945, 480, 985, 540, 1010]), BLUE, 6);
line(ml, conv('c', [540, 1010, 566, 1015, 620, 1018, 700, 980, 800, 930, 860, 870, 920, 830, 1030, 795]), RED, 6);
line(ml, conv('c', [1030, 795, 1090, 798, 1150, 805, 1215, 827]), BLUE, 6);

/* ---------- candles: [index, kind, high, bodyTop, bodyBottom, low] ---------- */
var cand = document.getElementById('main-candles');
var COL = { r: '#e83030', c: '#55ffff', m: '#ff30f0', w: '#e0e0e0' };
function drawCandles(yBase, list) {
  list.forEach(function (c) {
    var x = Math.round(5.5 + 10.487 * c[0]) + 0.5, k = c[1];
    var hi = yBase + c[2] / 3, top = yBase + c[3] / 3, bot = yBase + c[4] / 3, lo = yBase + c[5] / 3;
    var wickCol = k === 'm' ? COL.r : COL[k];
    add(cand, 'path', { d: 'M' + x + ' ' + hi + 'V' + lo, stroke: wickCol, 'stroke-width': 1.3 });
    if (k === 'w') {
      add(cand, 'path', { d: 'M' + (x - 3) + ' ' + top + 'H' + (x + 3), stroke: wickCol, 'stroke-width': 2 });
    } else if (k === 'r') {
      add(cand, 'rect', { x: x - 3.5, y: top, width: 7, height: Math.max(bot - top, 1), fill: '#000', stroke: COL.r, 'stroke-width': 1.3 });
    } else {
      add(cand, 'rect', { x: x - 4, y: top, width: 8, height: Math.max(bot - top, 2), fill: COL[k] });
    }
  });
}
drawCandles(90, [
  [0,'c',432,432,608,608],[1,'r',365,528,632,640],[2,'c',495,558,783,825],[3,'c',785,815,1048,1062],[4,'r',788,905,1020,1022],
  [5,'r',838,866,907,936],[6,'r',797,806,876,905],[7,'w',730,845,845,865],[8,'r',810,833,882,886],[9,'c',832,832,928,938],
  [10,'c',855,918,945,988],[11,'r',878,906,938,958],[12,'r',848,888,900,918],[13,'r',810,847,888,918],[14,'r',788,816,856,880],
  [15,'r',653,735,850,850],[16,'c',752,770,832,855],[17,'c',806,855,968,985],[18,'r',940,960,1030,1030],[19,'c',960,968,990,1040],
  [20,'c',1000,1000,1048,1098],[21,'r',922,968,1050,1060],[22,'c',928,945,977,1008],[23,'r',645,825,970,1075],[24,'c',802,855,935,955],
  [25,'r',880,920,947,998],[26,'c',842,875,945,955],[27,'r',882,938,970,1018],[28,'c',905,968,975,1012],[29,'r',940,968,1012,1015],
  [30,'r',935,988,1010,1012],[31,'c',960,978,990,1040],[32,'r',807,915,938,945],[33,'r',718,735,920,925],[34,'r',590,672,737,748],
  [35,'c',590,650,773,792],[36,'w',698,732,732,815],[37,'c',618,722,783,800],[38,'m',432,432,724,768],[39,'r',42,42,42,225],
  [40,'c',20,148,328,392],[41,'r',122,232,313,465],[42,'c',383,514,638,638],[43,'c',618,630,865,875],[44,'c',815,833,1048,1090],
  [45,'r',1015,1020,1060,1170],[46,'c',1050,1063,1172,1175],[47,'r',1105,1113,1155,1160],[48,'r',1065,1073,1092,1120],[49,'c',1072,1072,1088,1152],
  [50,'c',1062,1080,1102,1152],[51,'c',1105,1105,1130,1170],[52,'r',1105,1132,1155,1190],[53,'c',1130,1132,1192,1200],[54,'r',1108,1132,1235,1240],
  [55,'c',1135,1135,1225,1260],[56,'c',1230,1245,1400,1445],[57,'c',1410,1416,1494,1494],[58,'c',1495,1500,1560,1560]
]);
add(cand, 'path', { d: 'M409 104H418', stroke: COL.m, 'stroke-width': 2 });
drawCandles(380, [
  [59,'c',700,700,735,755],[60,'c',725,733,765,780],[61,'c',765,765,795,795],[64,'r',790,795,800,800],
  [75,'c',705,787,795,795],[76,'r',747,747,800,800],[77,'r',620,738,750,765],[78,'r',700,725,757,785],[79,'r',708,725,735,745],
  [80,'r',668,675,725,745],[81,'r',665,668,682,725],[82,'c',650,665,675,700],[83,'r',668,685,703,712],[84,'c',707,725,732,800],
  [85,'r',648,675,717,735],[86,'r',612,612,677,700],[87,'r',505,605,622,622],[88,'r',535,572,630,650],[89,'c',548,562,600,620],
  [90,'c',590,595,632,692],[91,'r',608,613,632,670],[92,'c',630,645,662,675],[93,'r',640,653,663,698],[94,'c',620,653,682,700],
  [95,'r',527,622,708,737],[96,'c',630,645,672,682],[97,'r',600,613,678,682],[98,'m',332,332,552,600],[99,'r',22,285,333,435],
  [100,'r',183,262,367,375],[101,'r',48,172,307,345],[102,'c',220,230,322,335],[103,'c',305,323,448,465],[104,'c',387,445,458,485],
  [105,'r',415,445,460,485],[106,'w',405,428,428,490],[107,'r',408,420,447,470],[108,'c',408,410,475,485],[109,'r',422,438,460,500],
  [110,'c',418,437,465,520],[111,'m',170,170,470,470],[112,'c',140,192,322,345],[113,'r',295,375,380,380],[114,'r',198,325,358,358],
  [115,'r',295,305,368,372],[116,'c',242,302,322,345],[117,'c',305,332,435,450]
]);
drawCandles(270, [
  [118,'r',700,715,760,775],[119,'c',703,725,830,835],[120,'r',785,817,850,868],[121,'c',808,815,932,950],[122,'r',892,942,962,962],
  [123,'c',920,950,972,995],[124,'c',950,950,1095,1103],[125,'r',1055,1078,1097,1122],[126,'c',1068,1077,1122,1122],[127,'r',1070,1105,1124,1124],
  [128,'r',1027,1055,1088,1115],[129,'r',968,983,1070,1072],[130,'c',932,932,972,995],[131,'c',958,960,1003,1022],[132,'c',995,1022,1065,1066],
  [133,'r',1026,1055,1088,1088],[134,'c',1045,1045,1075,1108],[135,'r',1013,1015,1072,1075],[136,'c',982,1003,1020,1045],[137,'r',995,997,1018,1055],
  [138,'r',948,952,995,1025],[139,'r',670,820,975,995],[140,'r',528,582,808,878],[141,'c',622,662,755,860],[142,'c',748,806,850,860],
  [143,'r',802,820,832,900],[144,'r',825,830,850,878],[145,'r',780,780,850,850],[146,'m',488,488,785,785],[147,'c',195,510,562,590],
  [148,'c',542,653,684,715],[149,'c',662,686,787,815],[150,'c',740,798,850,995],[151,'r',752,790,803,852],[152,'r',790,808,832,895],
  [153,'c',738,806,895,900],[154,'c',900,935,1062,1085],[155,'r',975,983,1034,1103],[156,'w',880,968,968,980],[157,'r',915,925,945,990],
  [158,'r',858,860,920,920],[159,'c',848,850,900,908]
]);

[[439, 192, 14, 14], [879, 598, 14, 10], [942, 554, 14, 12], [1068, 431, 13, 13], [1488, 499, 14, 13]].forEach(function (b) {
  add(cand, 'rect', { x: b[0], y: b[1], width: b[2], height: b[3], fill: '#0000f0' });
});

/* ---------- lower indicator ---------- */
var low = document.getElementById('low-lines');
var YEL = '#d8d800', RD = '#d80808';
var y1 = [8,350,27,335,45,380,65,382,82,392,115,352,138,377,160,385,175,400,210,400,240,365,250,355,265,355,283,325,340,400,413,400,430,347,448,362,466,340,485,395,503,378,520,400,540,380,575,385,595,375,630,277,650,305,685,415,705,332,742,332,760,305,795,305,815,415,833,368,850,368,868,350,885,378,905,378,942,415,960,400,978,400,996,360,1015,378,1033,378,1050,415];
var y2 = [1145,415,1165,382,1180,368,1200,368,1232,390,1250,390,1270,382,1285,377,1305,377,1325,385,1343,400,1362,382,1380,400,1435,347,1470,368,1490,368,1507,380,1525,387,1543,408,1560,387,1568,382];
var y3 = [0,382,12,380,30,350,45,342,65,362,85,395,125,395,140,382,158,405,177,368,195,382,213,362,230,305,250,150,268,90,285,92,300,230,342,415,360,390,378,390,397,370,415,397,433,370,450,392,467,333,487,360,505,323,523,345,542,320,560,355,578,395,595,400,615,400,632,382,650,405,670,387,690,405,745,405,762,387,780,387,798,370,855,415,870,410,890,408,908,400,925,408,945,400,962,400,980,330,1000,192,1017,200,1035,270,1053,385,1070,367,1090,335,1108,235,1125,255,1145,290,1165,415,1185,415,1200,378,1218,337,1237,337,1255,382,1272,397,1290,397,1307,380];
var r1 = [8,388,27,372,45,457,62,462,82,472,100,415,115,352,138,377,160,385,175,420,190,440,210,440,240,365,250,355,265,355,283,325,320,430,340,460,370,445,395,436,413,430,430,360,448,415,466,377,485,455,503,400,520,440,540,405,565,403,595,392,630,277,685,485,705,365,722,365,742,495,760,472,778,618,795,545,815,720,833,525,850,460,868,385,888,415,905,397,942,477,960,440,978,440,996,378,1030,465,1050,545,1070,555,1088,505,1105,490,1125,480,1143,492,1180,395,1200,395,1230,415,1240,415,1270,397,1285,392,1325,400,1343,433,1362,400,1380,447,1397,410,1417,395,1435,347,1470,368,1490,368,1507,395,1525,403,1543,433,1560,400,1568,398];
var r2 = [0,398,12,395,30,350,45,342,65,375,85,437,125,437,140,400,158,442,177,385,195,425,213,395,230,305,250,150,268,90,285,92,300,265,320,425,342,555,360,465,378,425,397,370,415,425,433,392,450,442,467,355,487,465,505,405,523,428,542,320,578,455,595,460,615,455,632,408,650,460,670,415,690,445,705,437,745,442,762,405,780,400,798,370,830,420,855,455,870,432,890,432,908,408,925,438,945,415,962,415,980,330,1000,192,1053,555,1070,410,1090,335,1108,235,1125,430,1145,570,1165,745,1185,570,1200,465,1218,387,1237,373,1255,450,1272,465,1290,437,1307,380,1345,378];
line(low, conv('d', r1).concat(conv('e', r2)), RD, 1.5);
line(low, conv('d', y1), YEL, 1.5);
line(low, conv('d', y2).concat(conv('e', y3)), YEL, 1.5);

/* ---------- time and sales ---------- */
var T = [
  ['09:42','3.59','0.5','S',1],['09:42','3.59','2.3','S',4],['09:42','3.59','3.6','',19],['09:42','3.60','2.9','B',15],
  ['09:42','3.60','1.3','B',19],['09:42','3.60','0.5','B',5],['09:42','3.60','0.3','B',2],['09:42','3.60','0.1','B',1],
  ['09:42','3.59','4.4','S',36],['09:43','3.58','21.8','S',56],['09:43','3.59','1.7','B',12],['09:43','3.59','2.2','B',20],
  ['09:43','3.59','1.7','B',31],['09:43','3.59','0.2','B',5],['09:43','3.59','0.8','B',2],['09:43','3.59','25.8','B',20],
  ['09:43','3.59','11.3','B',76],['09:43','3.58','9.8','S',9],['09:43','3.59','0.1','S',1],['09:43','3.59','0.0','S',1],
  ['09:43','3.59','1.1','S',2],['09:43','3.60','3.2','B',1],['09:43','3.59','2.1','S',2]
];
document.getElementById('ticks').innerHTML = T.map(function (t) {
  var big = parseFloat(t[2]) > 20 ? ' big' : '';
  return '<div class="t-row"><span class="t-time">' + t[0] + '</span><span class="t-price">' + t[1] +
    '</span><span class="t-vol' + big + '">' + t[2] + '<i>万</i></span><span class="t-bs ' + t[3] + '">' + t[3] +
    '</span><span class="t-n">' + t[4] + '</span></div>';
}).join('');
```
